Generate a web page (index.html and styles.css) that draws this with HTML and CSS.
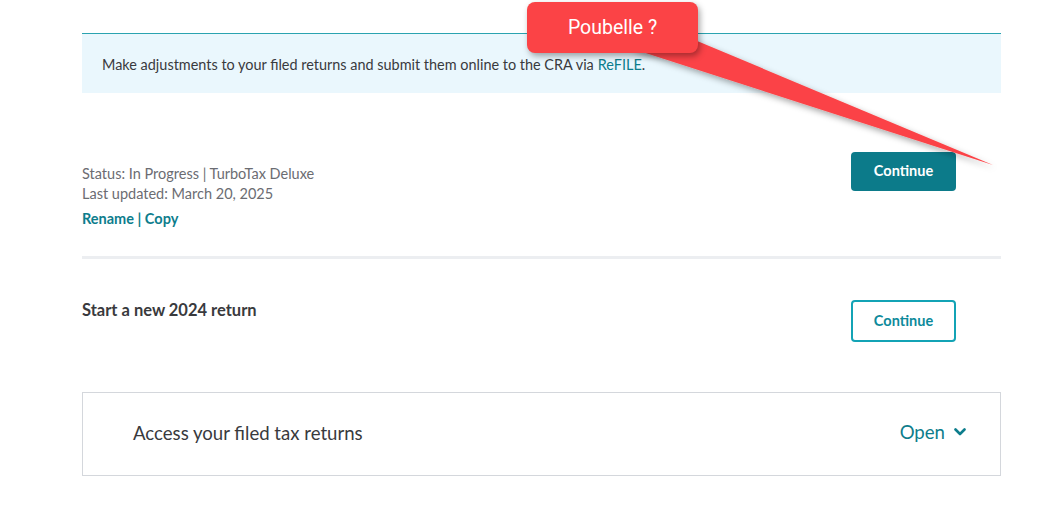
FILE: index.html
```html
<!DOCTYPE html>
<html lang="en">
<head>
<meta charset="utf-8">
<link rel="stylesheet" href="styles.css">
</head>
<body>
<div class="page">
  <div class="banner">Make adjustments to your filed returns and submit them online to the CRA via <a class="link" href="#">ReFILE</a>.</div>

  <div class="row row-progress">
    <div class="info">
      <div class="status">Status: In Progress | TurboTax Deluxe</div>
      <div class="status">Last updated: March 20, 2025</div>
      <div class="actions"><a href="#">Rename</a> | <a href="#">Copy</a></div>
    </div>
    <button class="btn btn-primary">Continue</button>
  </div>

  <div class="divider"></div>

  <div class="row row-new">
    <div class="new-title">Start a new 2024 return</div>
    <button class="btn btn-outline">Continue</button>
  </div>

  <div class="filed">
    <div class="filed-title">Access your filed tax returns</div>
    <div class="open">Open
      <svg class="chev" width="12" height="8" viewBox="0 0 12 8"><path d="M1.5 1.5 L6 6 L10.5 1.5" fill="none" stroke="#0d7d8c" stroke-width="2.6" stroke-linecap="round" stroke-linejoin="round"/></svg>
    </div>
  </div>
</div>

<svg class="callout-arrow" width="1053" height="200" viewBox="0 0 1053 200">
  <defs>
    <filter id="sh" x="-10%" y="-10%" width="130%" height="150%">
      <feDropShadow dx="2" dy="3" stdDeviation="3" flood-color="#000" flood-opacity="0.35"/>
    </filter>
  </defs>
  <polygon points="690,38 630,48 993,165" fill="#fb4346" filter="url(#sh)"/>
</svg>
<div class="callout">Poubelle ?</div>
</body>
</html>
```

FILE: styles.css
```css
html, body {
  margin: 0;
  padding: 0;
  background: #ffffff;
}

body {
  font-family: "Lato", "Open Sans", sans-serif;
  color: #393a3d;
  width: 1053px;
  height: 513px;
  overflow: hidden;
  position: relative;
}

.page {
  width: 919px;
  padding: 33px 0 0 82px;
}

.banner {
  border-top: 1px solid #2aa3b0;
  background: #eaf7fd;
  height: 59px;
  padding-left: 20px;
  padding-top: 1px;
  box-sizing: border-box;
  height: 60px;
  display: flex;
  align-items: center;
  font-size: 14.45px;
  color: #393a3d;
}

.banner .link {
  color: #0d7d8c;
  text-decoration: none;
  margin-left: 4px;
}

.row {
  display: flex;
  justify-content: space-between;
  align-items: flex-start;
}

.row-progress {
  margin-top: 59px;
  padding-right: 45px;
}

.info {
  padding-top: 12px;
}

.status {
  font-size: 14.5px;
  line-height: 20px;
  color: #6b6c72;
}

.actions {
  margin-top: 5px;
  font-size: 14.5px;
  line-height: 20px;
  font-weight: 700;
  color: #0d7d8c;
}

.actions a {
  color: #0d7d8c;
  text-decoration: none;
}

.btn {
  width: 105px;
  font-family: "Lato", sans-serif;
  font-size: 14.5px;
  font-weight: 700;
  border-radius: 4px;
  cursor: pointer;
  padding: 0;
}

.btn-primary {
  height: 39px;
  background: #0c7b8a;
  color: #ffffff;
  border: none;
  padding-bottom: 3px;
}

.btn-outline {
  height: 42px;
  background: #ffffff;
  color: #0d8a9b;
  border: 2px solid #13a3b5;
  padding-bottom: 2px;
}

.divider {
  margin-top: 27px;
  height: 3px;
  background: #eceef1;
}

.row-new {
  margin-top: 41px;
  padding-right: 45px;
}

.new-title {
  font-size: 16.5px;
  font-weight: 700;
  line-height: 17px;
  padding-top: 2px;
  color: #393a3d;
}

.filed {
  margin-top: 50px;
  height: 82px;
  border: 1px solid #d4d7dc;
  display: flex;
  align-items: center;
  justify-content: space-between;
  padding: 0 34px 0 50px;
}

.filed-title {
  font-size: 18.6px;
  color: #393a3d;
  padding-bottom: 3px;
}

.open {
  font-size: 18.6px;
  color: #0d7d8c;
  display: flex;
  align-items: center;
  gap: 9px;
  padding-bottom: 5px;
}

.chev {
  display: block;
  margin-top: 1px;
}

.callout-arrow {
  position: absolute;
  left: 0;
  top: 0;
}

.callout {
  position: absolute;
  left: 527px;
  top: 2px;
  width: 171px;
  height: 51px;
  border-radius: 8px;
  background: #fb4346;
  box-shadow: 2px 3px 6px rgba(0, 0, 0, 0.35);
  color: #ffffff;
  font-family: "Roboto", "Liberation Sans", sans-serif;
  font-size: 19.5px;
  display: flex;
  align-items: center;
  justify-content: center;
  padding-bottom: 1px;
  box-sizing: border-box;
}
```
